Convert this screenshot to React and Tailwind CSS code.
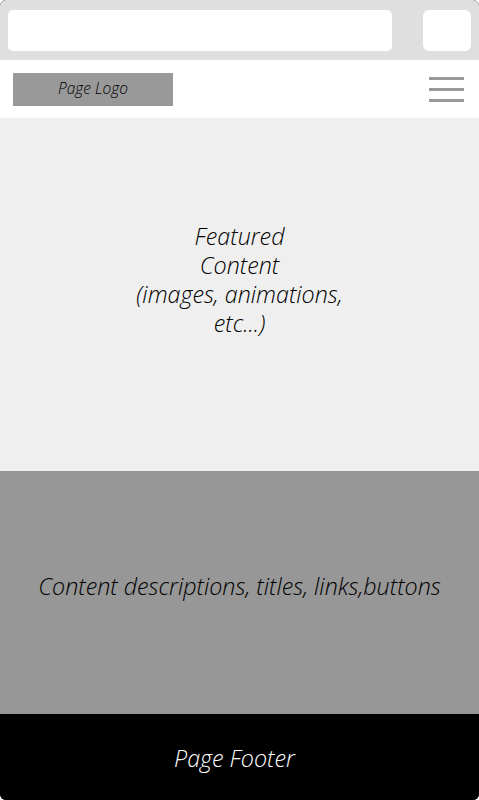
import React from 'react';

export default function App() {
  return (
    <div className="w-[479px] h-[800px] flex flex-col overflow-hidden rounded-[6px] bg-black font-['Open_Sans',sans-serif] italic font-light">
      {/* Browser bar */}
      <div className="h-[60px] bg-[#dfdfdf] flex items-center pl-[8px] pr-[8px] gap-[31px]">
        <div className="w-[384px] h-[41px] bg-white rounded-[5px]"></div>
        <div className="w-[48px] h-[41px] bg-white rounded-[6px]"></div>
      </div>

      {/* Header */}
      <div className="h-[58px] bg-white flex items-center justify-between pl-[13px] pr-[15px]">
        <div className="w-[160px] h-[33px] bg-[#999999] flex items-center justify-center text-[15.5px] text-black">
          Page Logo
        </div>
        <div className="flex flex-col gap-[8px] w-[35px]">
          <div className="h-[3px] bg-[#999999]"></div>
          <div className="h-[3px] bg-[#999999]"></div>
          <div className="h-[3px] bg-[#999999]"></div>
        </div>
      </div>

      {/* Featured */}
      <div className="h-[353px] bg-[#efefef] flex items-center justify-center pb-[30px]">
        <p className="w-[240px] text-center text-[23.3px] leading-[29px] text-black">
          Featured<br />Content<br />(images, animations,<br />etc...)
        </p>
      </div>

      {/* Content */}
      <div className="h-[243px] bg-[#979797] flex items-center justify-center pb-[12px]">
        <p className="text-[23.3px] text-black">Content descriptions, titles, links,buttons</p>
      </div>

      {/* Footer */}
      <div className="flex-1 bg-black flex items-center justify-center pr-[10px] pt-[2px]">
        <p className="text-[23.3px] text-white">Page Footer</p>
      </div>
    </div>
  );
}
